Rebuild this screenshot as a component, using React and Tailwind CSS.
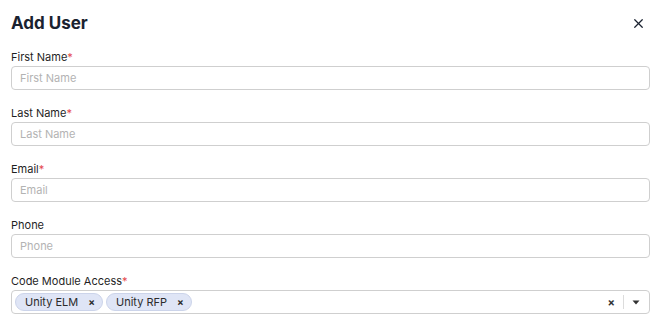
import { X } from 'lucide-react'

function Label({ text, required }) {
  return (
    <div className="h-[14px] text-[11px] leading-[14px] text-[#1f1f1f]">
      {text}
      {required && <span className="text-[#e5484d]">*</span>}
    </div>
  )
}

function Field({ label, required, placeholder }) {
  return (
    <div className="flex flex-col gap-[2px]">
      <Label text={label} required={required} />
      <input
        type="text"
        placeholder={placeholder}
        className="block w-full h-[24px] px-[8px] text-[11px] leading-[14px] border border-[#cfcfcf] rounded-[4px] placeholder:text-[#b3b3b3] outline-none"
      />
    </div>
  )
}

function Chip({ text }) {
  return (
    <span className="flex items-center h-[18px] rounded-full bg-[#dfe5f6] pl-[9px] pr-[7px] text-[11px] text-[#2b2b2b] border border-[#ccd4ea]">
      {text}
      <span className="ml-[10px] text-[10px] font-bold leading-none">×</span>
    </span>
  )
}

export default function App() {
  return (
    <div className="w-[658px] h-[327px] bg-white pl-[11px] pr-[8px] pt-[12px] overflow-hidden flex flex-col gap-[16px]" style={{ fontFamily: 'Inter, "Noto Sans", sans-serif' }}>
      <div className="flex items-center justify-between h-[22px] shrink-0">
        <h2 className="text-[17px] font-bold text-[#1a2230] leading-[22px]">Add User</h2>
        <button className="mr-[4px] text-[#1a2230]">
          <X size={15} strokeWidth={2} />
        </button>
      </div>

      <Field label="First Name" required placeholder="First Name" />
      <Field label="Last Name" required placeholder="Last Name" />
      <Field label="Email" required placeholder="Email" />
      <Field label="Phone" placeholder="Phone" />

      <div className="flex flex-col gap-[2px]">
        <Label text="Code Module Access" required />
        <div className="flex items-center h-[24px] px-[3px] border border-[#cfcfcf] rounded-[4px]">
          <div className="flex items-center gap-[3px] flex-1">
            <Chip text="Unity ELM" />
            <Chip text="Unity RFP" />
          </div>
          <span className="text-[11px] font-bold text-[#333] leading-none">×</span>
          <span className="w-px h-[14px] bg-[#dcdcdc] mx-[8px]"></span>
          <svg width="8" height="5" viewBox="0 0 8 5" className="mr-[6px]">
            <path d="M0.5 0.5 L7.5 0.5 L4 4.5 Z" fill="#333" />
          </svg>
        </div>
      </div>
    </div>
  )
}
